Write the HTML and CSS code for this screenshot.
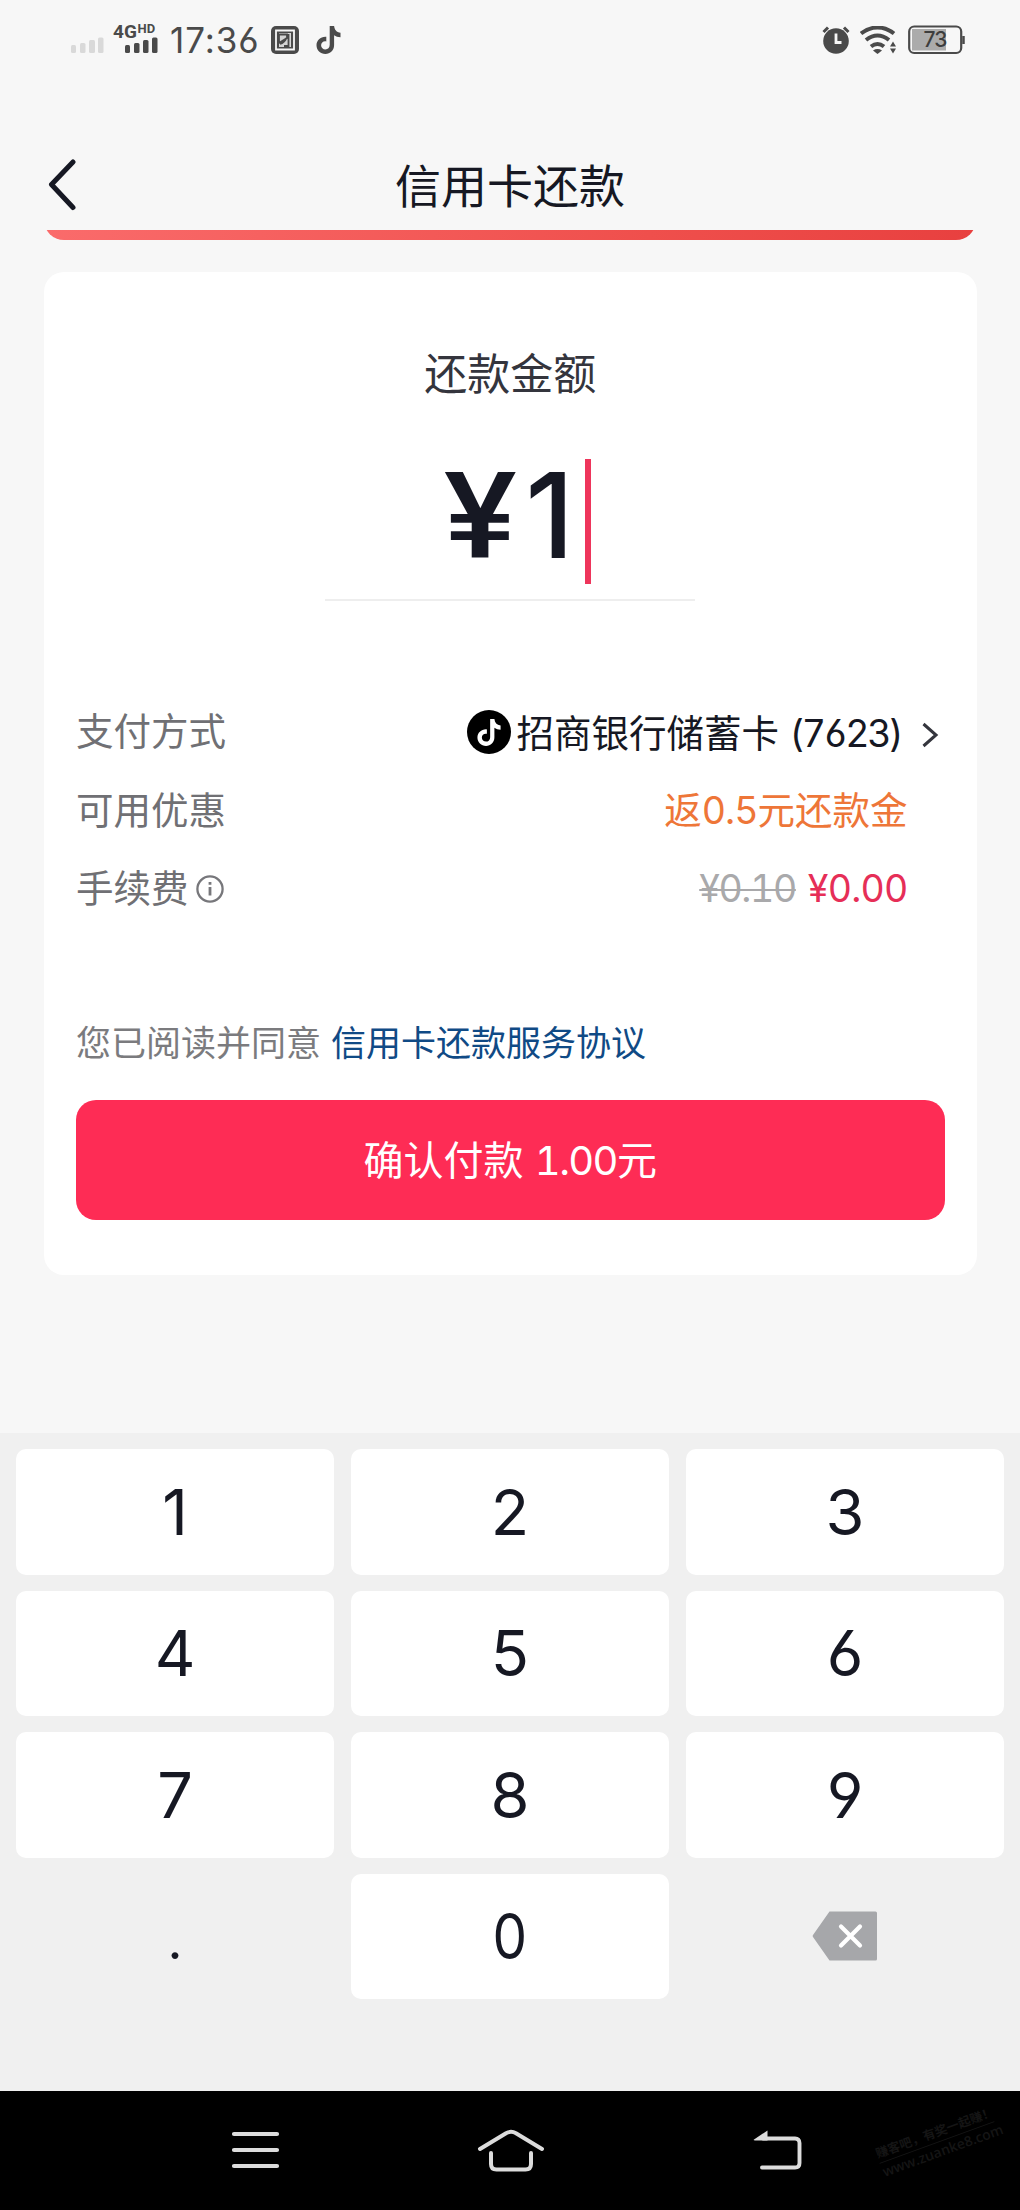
FILE: index.html
```html
<!DOCTYPE html>
<html lang="zh-CN">
<head>
<meta charset="utf-8">
<title>信用卡还款</title>
<link rel="stylesheet" href="styles.css">
</head>
<body>
<svg width="0" height="0" class="defs" aria-hidden="true">
  <symbol id="note" viewBox="0 0 24 28">
    <path d="M13.2 0H17.6C18 3.8 20 6.2 24 6.8V11.2C21.500 11.200 19.300 10.400 17.600 9.200V19C17.600 24.500 13.700 28 8.900 28C3.900 28 0 24.200 0 19.300C0 14.200 4.300 10.300 9.800 10.800V15.400C6.800 14.800 4.600 16.700 4.600 19.200C4.600 21.700 6.600 23.400 8.900 23.400C11.400 23.400 13.200 21.700 13.200 18.800Z"/>
  </symbol>
</svg>
<header class="status">
  <div class="status-left">
    <svg class="signals" width="90" height="54" viewBox="0 -10 90 54">
      <g fill="#d9d9d9"><rect x="1" y="22" width="5" height="8" rx="1.500"/><rect x="10" y="20" width="5.500" height="10" rx="1.500"/><rect x="19" y="17" width="6" height="13" rx="1.500"/><rect x="28" y="14.500" width="5.500" height="15.500" rx="1.500"/></g>
      <g fill="#4a4a4a"><rect x="55" y="22" width="5" height="8" rx="1.500"/><rect x="64" y="20" width="5.500" height="10" rx="1.500"/><rect x="73" y="17" width="5.500" height="13" rx="1.500"/><rect x="82" y="14.500" width="5.500" height="15.500" rx="1.500"/></g>
      <text x="43" y="14.500" class="net">4G</text><text x="67.500" y="9.500" class="net-hd">HD</text>
    </svg>
    <span class="time">17:36</span>
    <svg class="app" width="28" height="28" viewBox="0 0 28 28">
      <rect width="28" height="28" rx="5" fill="#4a4a4a"/>
      <path d="M5 4.500H23V23.500H5Z" fill="none" stroke="#f7f7f7" stroke-width="1.800"/>
      <path d="M8 7H20V21H8Z" fill="#d5d5d5"/>
      <path d="M8 8.500H16V12L8 17ZM17.500 8V20H13M15.500 12C14 15 12 17 9 18" fill="none" stroke="#4a4a4a" stroke-width="1.800"/>
    </svg>
    <svg class="tik" width="25" height="28" fill="#4a4a4a"><use href="#note"/></svg>
  </div>
  <div class="status-right">
    <svg width="28" height="28" viewBox="0 0 28 28">
      <circle cx="14" cy="15" r="12.800" fill="#4a4a4a"/>
      <path d="M1.500 6 6 1.500M26.500 6 22 1.500" stroke="#4a4a4a" stroke-width="3"/>
      <path d="M14 7.500V16.500H19.500" fill="none" stroke="#f7f7f7" stroke-width="2.800"/>
    </svg>
    <svg class="wifi" width="38" height="28" viewBox="0 0 38 28">
      <path d="M1 7.500C11 -.5 24 -.5 34 7.500M6 14C13.500 8.200 21.500 8.200 29 14M11 20.500C15.500 17 19.500 17 24 20.500" fill="none" stroke="#4a4a4a" stroke-width="4"/>
      <path d="M13 24.500C16 22.600 19 22.600 22 24.500L17.500 28Z" fill="#4a4a4a"/>
      <path d="M30 20.500 33 15.500 36 20.500ZM30 22.500H36L33 27.500Z" fill="#4a4a4a"/>
    </svg>
    <svg width="58" height="30" viewBox="0 0 58 30">
      <rect x="1.200" y="1.500" width="52" height="26.500" rx="5" fill="#f7f7f7" stroke="#4a4a4a" stroke-width="2.200"/>
      <path d="M4 4H38V25.500H4Z" fill="#ababab"/>
      <path d="M55.500 11V19" stroke="#4a4a4a" stroke-width="2.500"/>
      <text x="27" y="22" text-anchor="middle" class="battery">73</text>
    </svg>
  </div>
</header>
<nav class="title-bar">
  <svg class="back" width="30" height="52" viewBox="0 0 30 52"><path d="M26 3 4.500 25.500 26 48.500" fill="none" stroke="#161823" stroke-width="5" stroke-linecap="round" stroke-linejoin="round"/></svg>
  <h1>信用卡还款</h1>
</nav>
<div class="banner-clip"><div class="banner"></div></div>
<main class="card">
  <h2>还款金额</h2>
  <div class="amount"><span class="currency">¥</span><span class="amount-value">1</span><i class="caret"></i></div>
  <div class="rows">
    <div class="row">
      <span>支付方式</span>
      <span class="method">
        <svg width="44" height="44"><circle cx="22" cy="22" r="22"/><use href="#note" x="10" y="9" width="24" height="27" fill="#fff"/></svg>
        <span class="bank">招商银行储蓄卡 <b class="num">(7623)</b></span>
        <svg class="more" width="18" height="28" viewBox="0 0 18 28"><path d="M2.500 3 15 14 2.500 25" fill="none" stroke="#34353d" stroke-width="3"/></svg>
      </span>
    </div>
    <div class="row"><span>可用优惠</span><span class="value offer">返<b class="num">0.5</b>元还款金</span></div>
    <div class="row">
      <span class="fee">手续费<svg width="28" height="28" viewBox="0 0 28 28"><circle cx="14" cy="14" r="12.600" fill="none" stroke="#77777b" stroke-width="2.300"/><path d="M14 12V20.500M14 7V9.700" stroke="#77777b" stroke-width="2.800"/></svg></span>
      <span class="value"><s class="num">¥0.10</s><b class="num free">¥0.00</b></span>
    </div>
  </div>
  <p class="agree">您已阅读并同意<a>信用卡还款服务协议</a></p>
  <div class="pay">确认付款 <b class="num">1.00</b>元</div>
</main>
<section class="keypad">
  <div class="key">1</div><div class="key">2</div><div class="key">3</div>
  <div class="key">4</div><div class="key">5</div><div class="key">6</div>
  <div class="key">7</div><div class="key">8</div><div class="key">9</div>
  <div class="key plain point">.</div><div class="key"><span class="zero">0</span></div>
  <div class="key plain"><svg width="66" height="50" viewBox="0 0 66 50"><path d="M17.500 .5H63.500Q65 .5 65 2V48Q65 49.500 63.500 49.500H17.500L1 26Q.2 25 1 24Z" fill="#a6a7aa"/><path d="M29 15.500 48 34.500M48 15.500 29 34.500" stroke="#fff" stroke-width="4.200" stroke-linecap="round"/></svg></div>
</section>
<footer class="system-nav">
  <svg width="50" height="42" viewBox="0 0 50 42"><path d="M3 5H46M3 21H46M3 37H46" stroke="#dcdcdc" stroke-width="4.200" stroke-linecap="round"/></svg>
  <svg width="68" height="44" viewBox="0 0 68 44"><path d="M3 20 29 4.200Q34 1.500 39 4.200L65 20M14 24V35Q14 40.500 19.500 40.500H48.500Q54 40.500 54 35V24" fill="none" stroke="#dcdcdc" stroke-width="4" stroke-linecap="round"/></svg>
  <svg width="50" height="42" viewBox="0 0 50 42"><path d="M9 38.500H42Q46.500 38.500 46.500 34V14Q46.500 9.500 42 9.500H10" fill="none" stroke="#dcdcdc" stroke-width="3.900" stroke-linecap="round"/><path d="M1 10.500 14.500 1.500V11.400H2Q0 11.400 1 10.500Z" fill="#dcdcdc"/></svg>
  <div class="watermark"><span>赚客吧，有奖一起赚！</span><span>www.zuanke8.com</span></div>
</footer>
</body>
</html>
```
FILE: styles.css
```css
* { box-sizing: border-box; }
body {
  margin: 0;
  width: 1020px;
  height: 2210px;
  display: flex;
  flex-direction: column;
  overflow: hidden;
  background: #f7f7f7;
  color: #161823;
  font-family: Inter, "Noto Sans CJK SC", sans-serif;
  font-feature-settings: "cv03", "cv04";
}
svg { display: block; flex: none; }
h1, h2, p { margin: 0; font-weight: 400; }
.defs { position: absolute; }
.num { font-weight: 400; font-feature-settings: "cv03", "cv04", "tnum"; letter-spacing: -2.500px; }

.status {
  height: 80px;
  padding: 0 54px 0 70px;
  display: flex;
  justify-content: space-between;
  align-items: center;
}
.status-left, .status-right { display: flex; align-items: center; }
.net { font: 700 19px Roboto, sans-serif; fill: #4a4a4a; }
.net-hd { font: 700 13px Roboto, sans-serif; fill: #4a4a4a; }
.time { width: 92px; margin-left: 10px; font-size: 35px; line-height: 40px; letter-spacing: .9px; color: #4a4a4a; white-space: nowrap; }
.app { margin-left: 9px; }
.tik { margin-left: 17px; }
.wifi { margin-left: 10px; }
.status-right svg:last-child { margin-left: 10px; }
.battery { font: 500 21px Inter, sans-serif; letter-spacing: -1px; fill: #3d3d3d; }

.title-bar {
  height: 150px;
  padding: 26px 46px 0;
  display: grid;
  grid-template-columns: 30px 1fr 30px;
}
.back { margin: 53px 0 0 1px; }
h1 { margin-top: 46px; font-size: 46px; line-height: 68px; text-align: center; }

.banner-clip {
  height: 10px;
  margin: 0 44px;
  display: flex;
  align-items: flex-end;
  overflow: hidden;
}
.banner { flex: 1 0 auto; height: 60px; border-radius: 20px; background: linear-gradient(90deg, #fa6b6b, #ef4f4c 65%, #e8403f); }

.card {
  height: 1003px;
  margin: 32px 43.500px 0 44px;
  padding: 70px 32px 0;
  border-radius: 20px;
  background: #fff;
}
h2 { font-size: 43px; line-height: 64px; text-align: center; color: #34353d; }
.amount {
  width: 370px;
  height: 195px;
  margin: 0 auto;
  padding: 53px 0 0 119px;
  display: flex;
  border-bottom: 2px solid #eee;
  line-height: 113px;
  font-weight: 500;
}
.currency {
  width: 81px;
  padding-top: 2px;
  font-family: Roboto, sans-serif;
  font-size: 121px;
  transform: scaleX(1.13);
  transform-origin: left;
}
.amount-value { width: 60px; font-size: 118px; }
.caret { width: 6px; height: 125px; background: #ee355b; }

.rows { padding-top: 92px; font-size: 37.500px; color: #707074; }
.row { height: 78.500px; display: flex; justify-content: space-between; align-items: center; line-height: 56px; white-space: nowrap; }
.method { display: flex; align-items: center; color: #161823; }
.bank { width: 389px; margin: 3px 0 0 6px; line-height: 53px; }
.more { margin: 6px 6px 0 15px; }
.value { margin-right: 37px; }
.offer { color: #ee7638; }
.offer .num { letter-spacing: -1px; }
.fee { display: flex; align-items: center; gap: 7px; }
.value s { color: #a9a9ab; margin-right: 12px; letter-spacing: -1.400px; text-decoration-thickness: 2px; }
.free.num { color: #e62e57; letter-spacing: -.8px; }

.agree { margin-top: 88px; font-size: 35px; line-height: 52px; color: #7b7b7e; white-space: nowrap; }
.agree a { margin-left: 10px; color: #104a85; }
.pay {
  height: 120px;
  margin-top: 31.500px;
  border-radius: 20px;
  background: #fe2c55;
  color: #fff;
  font-size: 40px;
  line-height: 122px;
  text-align: center;
}
.pay .num { letter-spacing: -1.600px; }

.keypad {
  height: 658px;
  margin-top: 158px;
  padding: 16px 16px 0;
  display: grid;
  grid-template-columns: repeat(3, 1fr);
  grid-auto-rows: 125.500px;
  gap: 16px 17px;
  background: #f0f0f0;
}
.key {
  display: flex;
  align-items: center;
  justify-content: center;
  border-radius: 10px;
  background: #fff;
  font-size: 63px;
  line-height: 76px;
}
.plain { background: none; }
.point { padding-top: 10px; font-size: 52px; }
.zero { transform: scaleX(.87); }

.system-nav {
  position: relative;
  height: 119px;
  padding: 38px 0 0 231px;
  display: flex;
  background: #000;
}
.system-nav svg:nth-child(2) { margin-left: 196px; }
.system-nav svg:nth-child(3) { margin-left: 208px; }
.watermark {
  position: absolute;
  left: 876px;
  top: 33px;
  width: 122px;
  display: flex;
  flex-direction: column;
  transform: rotate(-20deg);
  color: #151515;
  font-size: 12.500px;
  line-height: 18px;
  font-weight: 700;
  white-space: nowrap;
}
.watermark span:last-child { border-top: 1px solid #151515; font: 600 14px/18px "Open Sans", sans-serif; }
```
